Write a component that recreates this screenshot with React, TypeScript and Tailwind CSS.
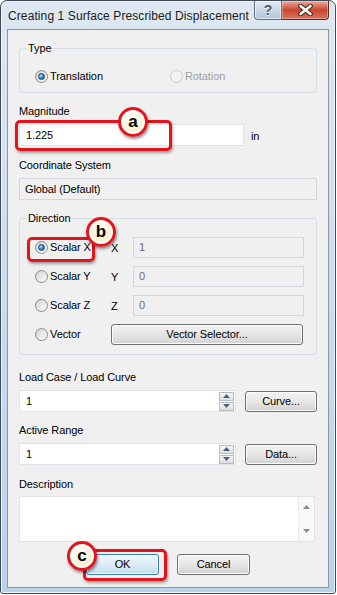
import React from 'react'

const font = "font-['Liberation_Sans',Arial,sans-serif]"

const btn =
  'flex items-center justify-center rounded-[3px] border border-[#707070] bg-linear-to-b from-[#f3f3f3] via-[#e6e6e6] to-[#d2d2d2] text-[11px] text-black shadow-[inset_0_0_0_1px_#fbfbfb]'

function Radio({ checked, disabled }: { checked?: boolean; disabled?: boolean }) {
  return (
    <span
      className={`flex h-[13px] w-[13px] shrink-0 items-center justify-center rounded-full border ${
        disabled
          ? 'border-[#c9c9c9] bg-[#f3f3f3]'
          : 'border-[#8a8a8a] bg-linear-to-br from-[#d2d2d2] to-[#fdfdfd]'
      }`}
    >
      {checked && (
        <span className="h-[7px] w-[7px] rounded-full border border-[#1f4e79] bg-[radial-gradient(circle_at_35%_35%,#a9e0ff,#2a79b8_60%,#0f3f6e)]" />
      )}
    </span>
  )
}

function Arrow({ up }: { up?: boolean }) {
  return (
    <svg width="7" height="4" viewBox="0 0 7 4">
      <path d={up ? 'M3.5 0L7 4H0z' : 'M0 0H7L3.5 4z'} fill="#4c607e" />
    </svg>
  )
}

function Spinner() {
  return (
    <div className="flex w-[16px] flex-col gap-[1px] py-[1px] pr-[1px]">
      <span className="flex h-[9px] items-center justify-center border border-[#b4bcc6] bg-linear-to-b from-[#f6f6f6] to-[#dedede]">
        <Arrow up />
      </span>
      <span className="flex h-[9px] items-center justify-center border border-[#b4bcc6] bg-linear-to-b from-[#f6f6f6] to-[#dedede]">
        <Arrow />
      </span>
    </div>
  )
}

function Label({ children, className = '' }: { children: React.ReactNode; className?: string }) {
  return <div className={`h-[14px] leading-[14px] ${className}`}>{children}</div>
}

function Callout({ letter, className }: { letter: string; className: string }) {
  return (
    <div
      className={`absolute flex h-[30px] w-[30px] items-center justify-center rounded-full border-[3px] border-[#e3141c] bg-[radial-gradient(circle_at_40%_35%,#fffef6,#fbe7b4)] text-[17px] font-bold leading-none text-black shadow-[1px_2px_3px_rgba(0,0,0,0.45),inset_0_0_0_2px_#ffffff] ${className}`}
    >
      <span className="-mt-[2px]">{letter}</span>
    </div>
  )
}

function RedBox({ className }: { className: string }) {
  return (
    <div
      className={`absolute rounded-[5px] border-[3px] border-[#e3141c] shadow-[1px_2px_3px_rgba(0,0,0,0.35)] ${className}`}
    />
  )
}

function ScalarRow({ name, axis, value, checked }: { name: string; axis: string; value: string; checked?: boolean }) {
  return (
    <div className="flex h-[21px] items-center">
      <div className="ml-[15px] flex w-[76px] items-center gap-[2px]">
        <Radio checked={checked} />
        <span>{name}</span>
      </div>
      <span className="w-[22px] pt-[2px]">{axis}</span>
      <div className="flex h-[21px] w-[171px] items-center border border-[#d3d6db] bg-[#f0f0f0] pl-[5px] text-[#6d6d6d]">
        {value}
      </div>
    </div>
  )
}

export default function App() {
  return (
    <div className={`h-[595px] w-[337px] bg-white ${font} text-[11px] text-black`}>
      <div className="flex h-[594px] w-[336px] flex-col rounded-t-[7px] rounded-b-[3px] border border-[#3f4957] bg-linear-to-b from-[#dfe8f2] via-[#c9dcf0] to-[#b8d2ec] shadow-[inset_0_0_0_1px_#eef5fc]">
        {/* title bar */}
        <div className="flex h-[28px] shrink-0 items-start">
          <div className="mt-[8px] pl-[7px] text-[12px] leading-[14px] tracking-[0.1px] text-[#1b1b1b]">
            Creating 1 Surface Prescribed Displacement ...
          </div>
          <div className="ml-auto mr-[6px] flex">
            <div className="flex h-[19px] w-[28px] items-center justify-center rounded-bl-[4px] border border-t-0 border-[#5e6c7c] bg-linear-to-b from-[#e6edf5] via-[#c9d6e4] to-[#b4c5d8] shadow-[inset_0_0_0_1px_rgba(255,255,255,0.6)]">
              <span className="text-[14px] font-bold leading-none text-[#4f5b6a] [text-shadow:0_1px_0_#f4f7fa]">
                ?
              </span>
            </div>
            <div className="flex h-[19px] w-[47px] items-center justify-center rounded-br-[4px] border border-l-0 border-t-0 border-[#5e2b22] bg-linear-to-b from-[#e9a99b] via-[#c9452d] to-[#d9735c] shadow-[inset_0_0_0_1px_rgba(255,255,255,0.35)]">
              <svg width="15" height="12" viewBox="0 0 15 12">
                <path
                  d="M2.5 2L12.5 10M12.5 2L2.5 10"
                  stroke="#47201a"
                  strokeWidth="4.6"
                  strokeLinecap="round"
                />
                <path d="M2.5 2L12.5 10M12.5 2L2.5 10" stroke="#ffffff" strokeWidth="2.6" strokeLinecap="round" />
              </svg>
            </div>
          </div>
        </div>

        {/* client area */}
        <div className="relative mx-[6px] mb-[5px] flex flex-1 flex-col border border-[#8b97a6] bg-[#f0f0f0] px-[11px] tracking-[-0.1px]">
          {/* Type */}
          <div className="relative mt-[18px] h-[45px] rounded-[3px] border border-[#d5dde4]">
            <span className="absolute -top-[8px] left-[7px] bg-[#f0f0f0] px-[1px] leading-[14px]">Type</span>
            <div className="mt-[19px] flex items-center">
              <div className="ml-[15px] flex w-[135px] items-center gap-[2px]">
                <Radio checked />
                <span>Translation</span>
              </div>
              <div className="flex items-center gap-[2px] text-[#a0a0a0]">
                <Radio disabled />
                <span>Rotation</span>
              </div>
            </div>
          </div>

          <Label className="mt-[11px]">Magnitude</Label>
          <div className="mt-[6px] flex items-center">
            <div className="flex h-[22px] w-[225px] items-center border border-[#dfe2e7] bg-white pl-[6px]">1.225</div>
            <span className="ml-[7px] pt-[2px]">in</span>
          </div>

          <Label className="mt-[12px]">Coordinate System</Label>
          <div className="mt-[6px] flex h-[22px] items-center border border-[#d3d6db] bg-[#f0f0f0] pl-[5px]">
            Global (Default)
          </div>

          {/* Direction */}
          <div className="relative mt-[18px] flex h-[137px] flex-col gap-[8px] rounded-[3px] border border-[#d5dde4] pt-[18px]">
            <span className="absolute -top-[8px] left-[7px] bg-[#f0f0f0] px-[1px] leading-[14px]">Direction</span>
            <ScalarRow name="Scalar X" axis="X" value="1" checked />
            <ScalarRow name="Scalar Y" axis="Y" value="0" />
            <ScalarRow name="Scalar Z" axis="Z" value="0" />
            <div className="flex h-[21px] items-center">
              <div className="ml-[15px] flex w-[76px] items-center gap-[2px]">
                <Radio />
                <span>Vector</span>
              </div>
              <div className={`${btn} h-[21px] w-[192px]`}>Vector Selector...</div>
            </div>
          </div>

          <Label className="mt-[15px]">Load Case / Load Curve</Label>
          <div className="mt-[6px] flex items-center">
            <div className="flex h-[22px] w-[217px] items-center border border-[#dfe2e7] bg-white pl-[6px]">
              <span className="flex-1">1</span>
              <Spinner />
            </div>
            <div className={`${btn} ml-[9px] h-[21px] w-[72px]`}>Curve...</div>
          </div>

          <Label className="mt-[11px]">Active Range</Label>
          <div className="mt-[6px] flex items-center">
            <div className="flex h-[22px] w-[217px] items-center border border-[#dfe2e7] bg-white pl-[6px]">
              <span className="flex-1">1</span>
              <Spinner />
            </div>
            <div className={`${btn} ml-[9px] h-[21px] w-[72px]`}>Data...</div>
          </div>

          <Label className="mt-[12px]">Description</Label>
          <div className="mt-[5px] flex h-[46px] w-[296px] border border-[#dfe2e7] bg-white">
            <div className="flex-1" />
            <div className="flex w-[16px] flex-col items-center justify-between border-l border-[#eaeaea] bg-[#f8f8f8] py-[8px]">
              <svg width="7" height="4" viewBox="0 0 7 4">
                <path d="M3.5 0L7 4H0z" fill="#8a8a8a" />
              </svg>
              <svg width="7" height="4" viewBox="0 0 7 4">
                <path d="M0 0H7L3.5 4z" fill="#8a8a8a" />
              </svg>
            </div>
          </div>

          <div className="mt-[12px] flex justify-center gap-[18px]">
            <div className="flex h-[21px] w-[73px] items-center justify-center rounded-[3px] border border-[#3c7fb1] bg-linear-to-b from-[#eef7fd] via-[#dcebf6] to-[#c3dcef] shadow-[inset_0_0_0_1px_#f5fbff]">
              OK
            </div>
            <div className={`${btn} h-[21px] w-[73px]`}>Cancel</div>
          </div>

          {/* annotations */}
          <RedBox className="left-[7px] top-[90px] h-[31px] w-[157px]" />
          <Callout letter="a" className="left-[110px] top-[77px]" />
          <RedBox className="left-[19px] top-[207px] h-[25px] w-[68px]" />
          <Callout letter="b" className="left-[78px] top-[187px]" />
          <RedBox className="left-[75px] top-[519px] h-[32px] w-[84px]" />
          <Callout letter="c" className="left-[59px] top-[511px]" />
        </div>
      </div>
    </div>
  )
}
